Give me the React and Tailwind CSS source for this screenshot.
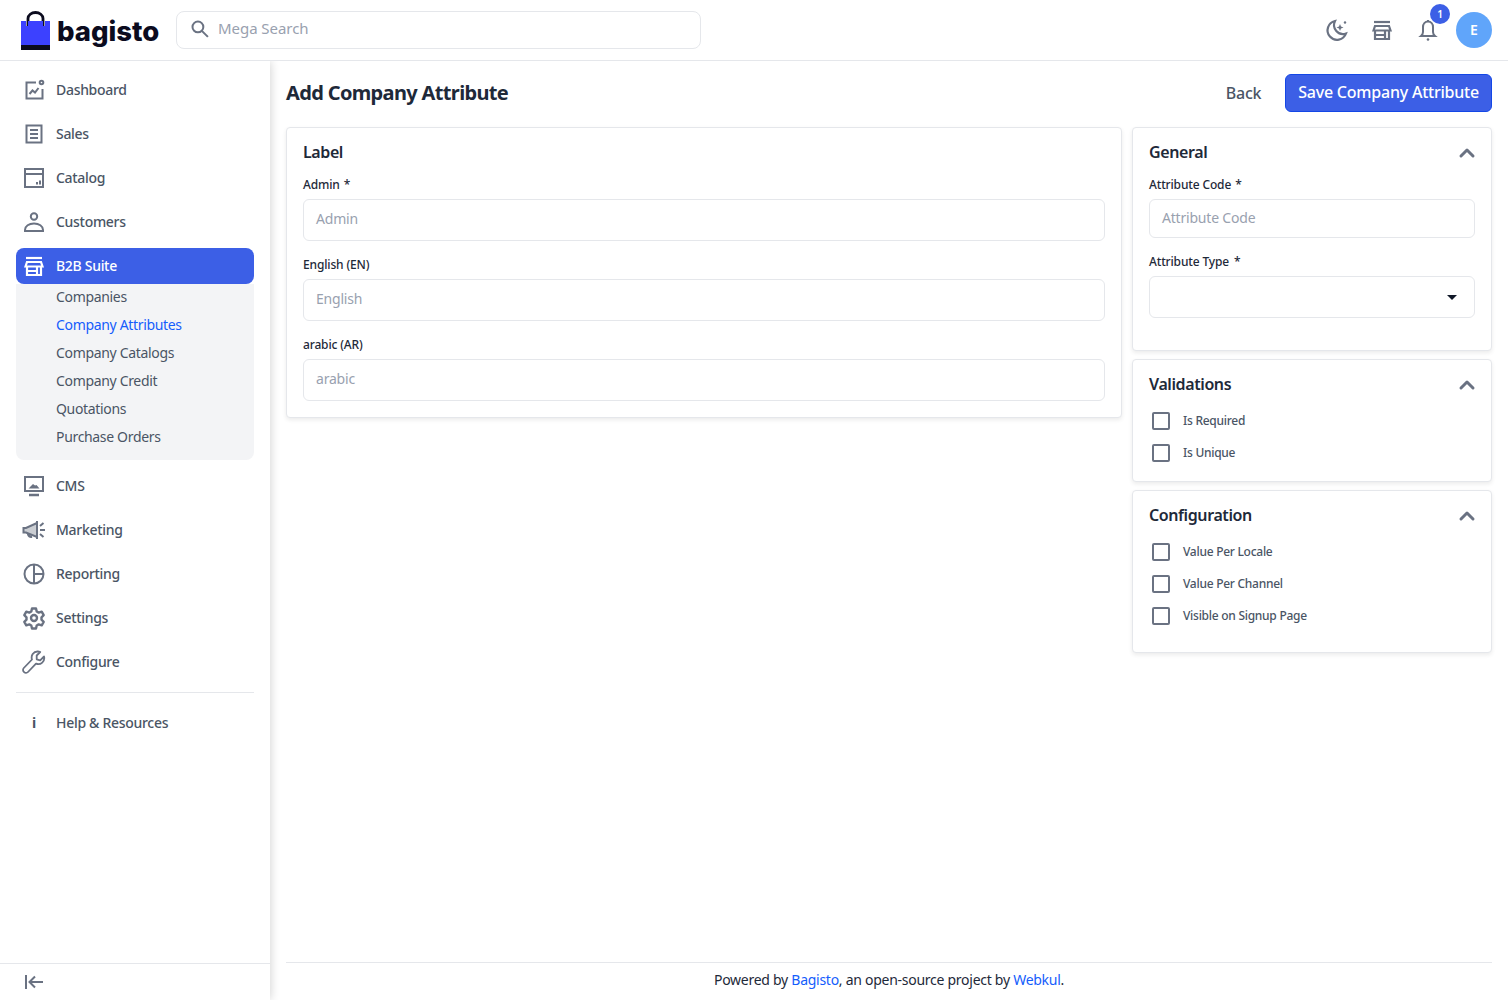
import React from 'react';
import { ChevronUp } from 'lucide-react';

const font = "font-['Noto_Sans',sans-serif]";

const Dashboard = () => (
  <svg viewBox="0 0 24 24" className="w-6 h-6" fill="none" stroke="currentColor" strokeWidth="2">
    <path d="M14 4.500H4.500v16h16V11" />
    <circle cx="19.500" cy="4.500" r="1.800" />
    <path d="M7.500 16l3-3.500 2.500 2 3.500-4.500" />
  </svg>
);
const SalesIcon = () => (
  <svg viewBox="0 0 24 24" className="w-6 h-6" fill="none" stroke="currentColor" strokeWidth="2">
    <rect x="4.500" y="3.500" width="15" height="17" />
    <path d="M8 8h8M8 12h8M8 16h8" />
  </svg>
);
const CatalogIcon = () => (
  <svg viewBox="0 0 24 24" className="w-6 h-6" fill="none" stroke="currentColor" strokeWidth="2">
    <rect x="3" y="3" width="18" height="18" />
    <path d="M3 8h18M15 18.500v-2.500M18 18.500v-4" />
  </svg>
);
const CustomerIcon = () => (
  <svg viewBox="0 0 24 24" className="w-6 h-6" fill="none" stroke="currentColor" strokeWidth="2">
    <circle cx="12" cy="6.500" r="3.200" />
    <path d="M3 21v-1c0-4 4-6.500 9-6.500s9 2.500 9 6.500v1z" />
  </svg>
);
const StoreIcon = ({ className = 'w-6 h-6' }) => (
  <svg viewBox="0 0 24 24" className={className} fill="none" stroke="currentColor" strokeWidth="2.200">
    <path d="M4 4h16" />
    <path d="M3.500 12.500L5 8h14l1.500 4.500z" />
    <path d="M5 12.500V21h14v-8.500M5 17h10M15 12.500V21" />
  </svg>
);
const MoonIcon = () => (
  <svg viewBox="0 0 24 24" className="w-6 h-6" fill="none" stroke="currentColor" strokeWidth="2.200">
    <path d="M11 3a9.500 9.500 0 1 0 11 12.500A9 9 0 0 1 11 3z" />
    <path d="M16 6l1 2.500 2.500 1-2.500 1-1 2.500-1-2.500-2.500-1 2.500-1z" fill="currentColor" stroke="none" />
    <circle cx="21" cy="4.500" r="1.200" fill="currentColor" stroke="none" />
  </svg>
);
const BellIcon = () => (
  <svg viewBox="0 0 24 24" className="w-6 h-6" fill="none" stroke="currentColor" strokeWidth="2">
    <path d="M12 3.500c-3 0-5 2.500-5 5.500v5c0 2-.800 3-2 4h14c-1.200-1-2-2-2-4V9c0-3-2-5.500-5-5.500z" />
    <path d="M12 2v1.500" />
    <circle cx="12" cy="21.500" r="1.300" fill="currentColor" stroke="none" />
  </svg>
);
const SearchIcon = () => (
  <svg viewBox="0 0 24 24" className="w-5 h-5" fill="none" stroke="currentColor" strokeWidth="2.400">
    <circle cx="9.500" cy="9.500" r="6.500" />
    <path d="M14.500 14.500l7 7" />
  </svg>
);
const CmsIcon = () => (
  <svg viewBox="0 0 24 24" className="w-6 h-6" fill="none" stroke="currentColor" strokeWidth="2">
    <rect x="3" y="3" width="18" height="14" />
    <path d="M7 21h10" strokeWidth="2.500" />
    <path d="M6.500 14.500l2.500-2.500 2-2 2 1.500 1.500-.500 3 3.500z" fill="currentColor" stroke="none" />
  </svg>
);
const MarketingIcon = () => (
  <svg viewBox="0 0 24 24" className="w-6 h-6" fill="none" stroke="currentColor" strokeWidth="2">
    <path d="M15 3v18" />
    <path d="M15 5L4 10H1.500v4.500H4L15 19z" fill="currentColor" fillOpacity="0.35" />
    <path d="M6 15.500c.500 2.500 2 3.500 4 3" strokeWidth="2.500" />
    <path d="M18 8l3.500-3M18 12h5M18 16l3.500 3" />
  </svg>
);
const ReportingIcon = () => (
  <svg viewBox="0 0 24 24" className="w-6 h-6" fill="none" stroke="currentColor" strokeWidth="2">
    <circle cx="12" cy="12" r="9.500" />
    <path d="M12 2.500v19M12 12h9.500" />
  </svg>
);
const GearIcon = () => (
  <svg viewBox="0 0 24 24" className="w-6 h-6" fill="none" stroke="currentColor" strokeWidth="2.400">
    <path d="M10 2.500h4l.700 3 2 1.100 3-.900 2 3.500-2.200 2.100v2.400l2.200 2.100-2 3.500-3-.900-2 1.100-.700 3h-4l-.700-3-2-1.100-3 .900-2-3.500 2.200-2.100v-2.400L2.300 9.200l2-3.500 3 .900 2-1.100z" strokeLinejoin="round" />
    <circle cx="12" cy="12" r="3" />
  </svg>
);
const WrenchIcon = () => (
  <svg viewBox="0 0 24 24" className="w-6 h-6" fill="none" stroke="currentColor" strokeWidth="1.800" strokeLinejoin="round">
    <path d="M15.500 1.500a6 6 0 0 0-5.500 8L1.800 18a2.700 2.700 0 0 0 .1 3.900l.2.200a2.700 2.700 0 0 0 3.900-.1L14 13.700a6 6 0 0 0 8-7.200l-3.800 3.800-3.500-1V5.500l3.500-3.500a6 6 0 0 0-2.700-.500z" />
  </svg>
);
const Collapse = () => (
  <svg viewBox="0 0 24 24" className="w-6 h-6" fill="none" stroke="currentColor" strokeWidth="2">
    <path d="M4 5v14M21 12H8M13 6.500L7.500 12l5.500 5.500" />
  </svg>
);

const menuTop = [
  { label: 'Dashboard', icon: <Dashboard /> },
  { label: 'Sales', icon: <SalesIcon /> },
  { label: 'Catalog', icon: <CatalogIcon /> },
  { label: 'Customers', icon: <CustomerIcon /> },
];
const menuBottom = [
  { label: 'CMS', icon: <CmsIcon /> },
  { label: 'Marketing', icon: <MarketingIcon /> },
  { label: 'Reporting', icon: <ReportingIcon /> },
  { label: 'Settings', icon: <GearIcon /> },
  { label: 'Configure', icon: <WrenchIcon /> },
];
const subItems = ['Companies', 'Company Attributes', 'Company Catalogs', 'Company Credit', 'Quotations', 'Purchase Orders'];

const NavItem = ({ item }) => (
  <div className="h-9 flex items-center gap-[10px] px-[6px] text-gray-600">
    <span className="w-6 h-6 shrink-0 text-gray-500">{item.icon}</span>
    <span className="text-sm font-medium tracking-[-0.3px]">{item.label}</span>
  </div>
);

const Field = ({ label, placeholder, required, h = 'h-[42px]' }) => (
  <div>
    <label className="block text-xs font-medium text-gray-800 leading-6 h-6 tracking-[-0.15px]">
      {label}{required && <span className="ml-1">*</span>}
    </label>
    <div className={`${h} mt-[2px] pb-[2px] border border-gray-200 rounded-md px-3 flex items-center text-sm text-gray-400 tracking-[-0.2px]`}>
      {placeholder}
    </div>
  </div>
);

const Check = ({ label }) => (
  <div className="h-8 flex items-center gap-[13px] pl-[3px]">
    <span className="w-[18px] h-[18px] border-2 border-gray-500 rounded-[2px]"></span>
    <span className="text-xs font-medium text-gray-600 tracking-[-0.27px]">{label}</span>
  </div>
);

const PanelHead = ({ title }) => (
  <div className="flex items-center justify-between">
    <p className="text-base font-semibold text-gray-800 tracking-[-0.4px]">{title}</p>
    <ChevronUp className="w-6 h-6 -mr-1 translate-y-px text-gray-500" strokeWidth={3} />
  </div>
);

const Card = ({ className, children }) => (
  <div className={`bg-white border border-gray-200 rounded shadow-[0_2px_4px_rgba(0,0,0,0.08)] ${className}`}>{children}</div>
);

export default function App() {
  return (
    <div className={`${font} h-screen overflow-hidden bg-white flex flex-col`}>
      <header className="relative z-10 bg-white h-[61px] shrink-0 border-b border-gray-200 flex items-center justify-between pl-[21px] pr-4">
        <div className="flex items-center">
          <svg viewBox="0 0 29 39" className="w-[29px] h-[39px]">
            <path d="M7 16V7.500a7.500 6 0 0 1 15 0V16" fill="none" stroke="#0b0b1e" strokeWidth="2.800" strokeLinecap="round" />
            <path d="M0 10h5v5h2v-5h15v5h2v-5h5v24H0z" fill="#3c41ff" />
            <rect x="0" y="34" width="29" height="5" fill="#0b0b1e" />
          </svg>
          <span className="ml-[7px] w-[113px] pt-[3px] text-[27.5px] leading-none font-['Inter',sans-serif] font-extrabold text-[#0b0b1e]">bagisto</span>
          <div className="ml-[6px] w-[525px] h-[38px] pb-[3px] border border-gray-200 rounded-lg flex items-center pl-[13px] text-gray-400">
            <span className="text-gray-500"><SearchIcon /></span>
            <span className="ml-2 text-[15px] tracking-[-0.05px]">Mega Search</span>
          </div>
        </div>
        <div className="flex items-center">
          <span className="text-gray-500"><MoonIcon /></span>
          <span className="ml-[22px] text-gray-500"><StoreIcon /></span>
          <div className="relative ml-[22px] w-6 h-6 text-gray-500">
            <BellIcon />
            <span className="absolute -top-[14px] left-[14px] w-5 h-5 rounded-full bg-[#3c5fe6] text-white text-[10px] font-semibold flex items-center justify-center">1</span>
          </div>
          <div className="ml-4 w-9 h-9 rounded-full bg-[#60a5fa] text-white text-sm font-semibold flex items-center justify-center">E</div>
        </div>
      </header>

      <div className="flex flex-1 min-h-0">
        <aside className="w-[270px] shrink-0 flex flex-col shadow-[0_0_10px_rgba(0,0,0,0.2)]">
          <div className="flex-1 px-4 pt-[11px]">
            <div className="flex flex-col gap-2">
              {menuTop.map(item => <NavItem key={item.label} item={item} />)}
              <div>
                <div className="h-9 flex items-center gap-[10px] px-[6px] rounded-lg bg-[#3c5fe6] text-white">
                  <StoreIcon />
                  <span className="text-sm font-medium tracking-[-0.3px]">B2B Suite</span>
                </div>
                <div className="bg-gray-100 rounded-b-lg pl-10 pb-[8px]">
                  {subItems.map((s, i) => (
                    <p key={s} className={`h-7 leading-[26px] text-sm tracking-[-0.33px] ${i === 1 ? 'text-blue-600' : 'text-gray-600'}`}>{s}</p>
                  ))}
                </div>
              </div>
              {menuBottom.map(item => <NavItem key={item.label} item={item} />)}
            </div>
            <div className="mt-3 border-t border-gray-200"></div>
            <div className="mt-3 h-9 flex items-center gap-[10px] px-[6px] text-gray-600">
              <span className="w-6 h-6 flex items-center justify-center text-gray-600 text-sm font-bold">i</span>
              <span className="text-sm font-medium tracking-[-0.3px]">Help &amp; Resources</span>
            </div>
          </div>
          <div className="h-[37px] border-t border-gray-200 flex items-center pl-[22px] text-gray-500">
            <Collapse />
          </div>
        </aside>

        <main className="flex-1 min-w-0 flex flex-col px-4">
          <div className="flex-1">
            <div className="h-[38px] mt-[13px] flex items-center justify-between">
              <h1 className="text-xl font-bold text-gray-800 tracking-[-0.65px]">Add Company Attribute</h1>
              <div className="flex items-center">
                <span className="text-base font-medium text-gray-600 tracking-[-0.25px] -mt-px">Back</span>
                <button className="ml-6 h-[38px] px-3 pb-[2px] rounded-md bg-[#3c5fe6] border border-blue-700 text-white text-base font-medium tracking-[-0.22px]">Save Company Attribute</button>
              </div>
            </div>
            <div className="mt-[15px] flex gap-[10px] items-start">
              <Card className="w-[836px] h-[291px] px-4 pt-[10px]">
                <p className="text-base font-semibold text-gray-800 leading-7 tracking-[-0.4px]">Label</p>
                <div className="mt-[7px] flex flex-col gap-[12px]">
                  <Field label="Admin" placeholder="Admin" required />
                  <Field label="English (EN)" placeholder="English" />
                  <Field label="arabic (AR)" placeholder="arabic" />
                </div>
              </Card>
              <div className="w-[360px] flex flex-col gap-2">
                <Card className="h-[224px] px-4 pt-3">
                  <PanelHead title="General" />
                  <div className="mt-[9px]">
                    <Field label="Attribute Code" placeholder="Attribute Code" required h="h-[39px]" />
                  </div>
                  <div className="mt-[12px]">
                    <label className="block text-xs font-medium text-gray-800 leading-6 h-6 tracking-[-0.15px]">Attribute Type <span className="ml-[2px]">*</span></label>
                    <div className="mt-[2px] h-[42px] border border-gray-200 rounded-md flex items-center justify-end pr-[17px]">
                      <span className="w-0 h-0 border-x-[5px] border-x-transparent border-t-[5px] border-t-gray-900"></span>
                    </div>
                  </div>
                </Card>
                <Card className="h-[123px] px-4 pt-3">
                  <PanelHead title="Validations" />
                  <div className="mt-[9px]">
                    <Check label="Is Required" />
                    <Check label="Is Unique" />
                  </div>
                </Card>
                <Card className="h-[163px] px-4 pt-3">
                  <PanelHead title="Configuration" />
                  <div className="mt-[9px]">
                    <Check label="Value Per Locale" />
                    <Check label="Value Per Channel" />
                    <Check label="Visible on Signup Page" />
                  </div>
                </Card>
              </div>
            </div>
          </div>
          <footer className="h-[38px] pb-[3px] border-t border-gray-200 flex items-center justify-center text-sm text-gray-800 tracking-[-0.27px]">
            <span>Powered by <span className="text-blue-600">Bagisto</span>, an open-source project by <span className="text-blue-600">Webkul</span>.</span>
          </footer>
        </main>
      </div>
    </div>
  );
}
